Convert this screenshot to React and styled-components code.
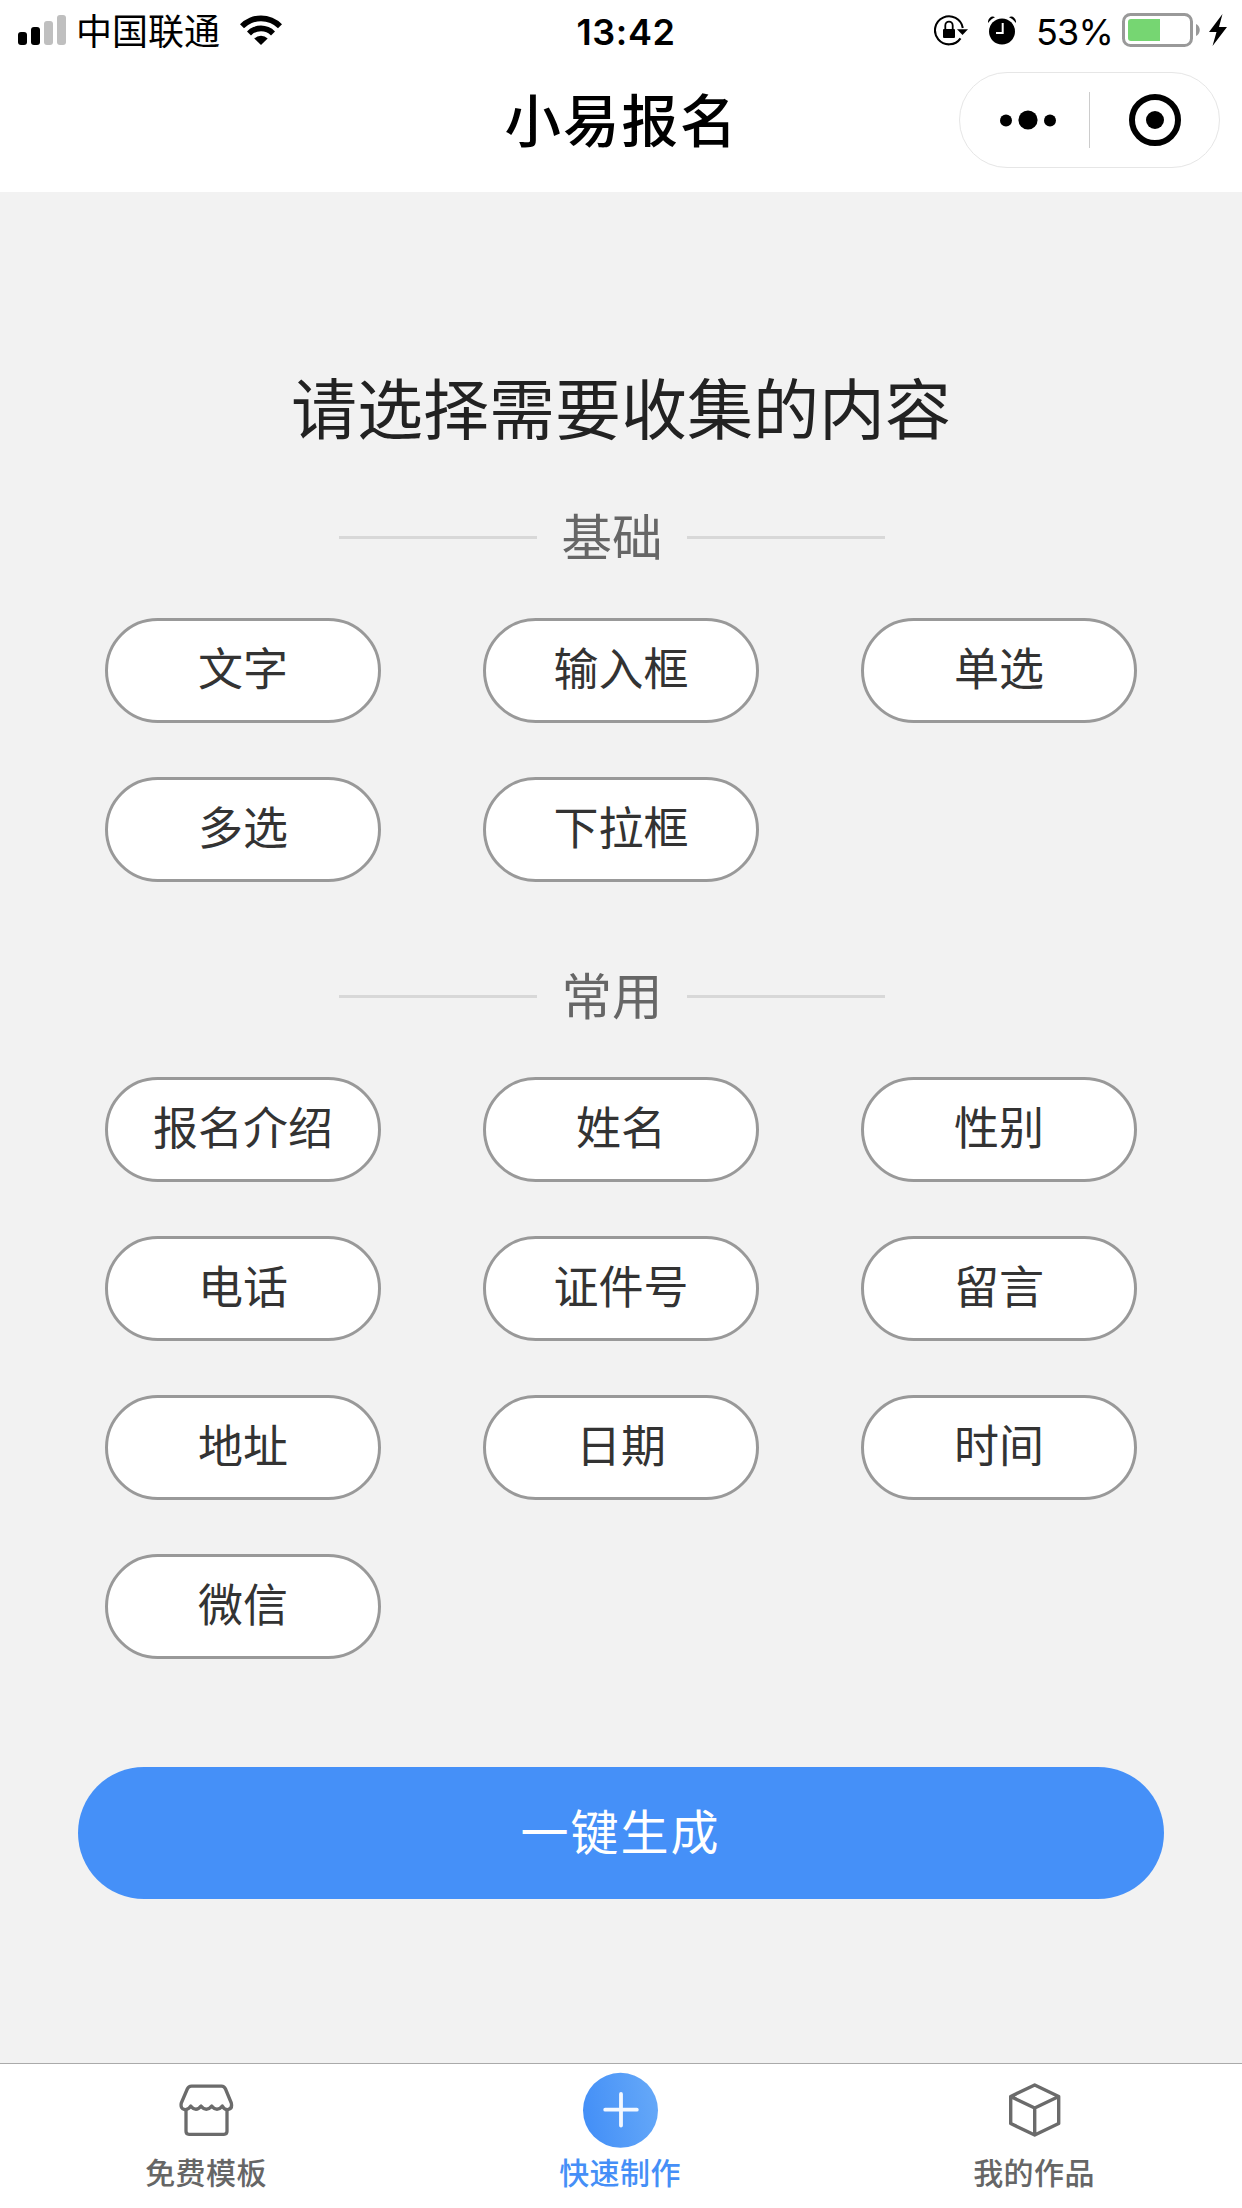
import { useState } from 'react';
import styled, { createGlobalStyle } from 'styled-components';

const basicos = ['文字', '输入框', '单选', '多选', '下拉框'];
const comuns = ['报名介绍', '姓名', '性别', '电话', '证件号', '留言', '地址', '日期', '时间', '微信'];

function StatusBar() {
  return (
    <EstiloStatus>
      <div className="side">
        <svg width="48" height="30" viewBox="0 0 48 30">
          <rect x="0" y="17" width="9" height="13" rx="3" />
          <rect x="13" y="12" width="9" height="18" rx="3" />
          <rect x="26" y="6" width="9" height="24" rx="3" fill="#bfbfbf" />
          <rect x="39" y="0" width="9" height="30" rx="3" fill="#bfbfbf" />
        </svg>
        <span className="carrier">中国联通</span>
        <svg className="wifi" width="42" height="30" viewBox="0 0 42 30">
          <path d="M0 9.2A29.5 29.5 0 0 1 42 9.2L38 13.3A23.8 23.8 0 0 0 4 13.3Z" />
          <path d="M7 16.4A19.6 19.6 0 0 1 35 16.4L31 20.4A14 14 0 0 0 11 20.4Z" />
          <path d="M14.3 23.4A9.6 9.6 0 0 1 27.7 23.4L21 30Z" />
        </svg>
      </div>
      <span className="time">13:42</span>
      <div className="side right">
        <svg width="34" height="31" viewBox="0 0 34 31">
          <path d="M26.5 23.3A14 14 0 1 1 28.8 13" fill="none" stroke="#000" strokeWidth="2.1" />
          <path d="M23 14.2H34L28.5 20Z" />
          <rect x="9" y="14" width="12" height="9" rx="1" />
          <path d="M11.3 14.5V10.5A3.7 3.9 0 0 1 18.7 10.5V14.5" fill="none" stroke="#000" strokeWidth="1.8" />
        </svg>
        <svg className="alarm" width="28" height="29" viewBox="0 0 28 29">
          <circle cx="14" cy="15.5" r="13" />
          <path d="M0 7C-.5 2 4 -1 7 1.2C4.3 2.3 2 4.3 0 7ZM28 7C28.5 2 24 -1 21 1.2C23.7 2.3 26 4.3 28 7Z" />
          <path d="M14.7 7V17H8" fill="none" stroke="#fff" strokeWidth="2" />
        </svg>
        <span className="percent">53%</span>
        <svg width="78" height="34" viewBox="0 0 78 34">
          <rect x="1.5" y="1.5" width="68" height="31" rx="7" fill="none" stroke="#999" strokeWidth="3" />
          <path d="M9 6H38V28H9A3 3 0 0 1 6 25V9A3 3 0 0 1 9 6Z" fill="#76d672" />
          <path d="M74 11C79 13 79 21 74 23Z" fill="#999" />
        </svg>
        <svg className="bolt" width="18" height="32" viewBox="0 0 18 32">
          <path d="M13.5 0L0 18H7.5L3.5 32L18 13H10Z" />
        </svg>
      </div>
    </EstiloStatus>
  )
}

function Secao({ title, items }) {
  return (
    <>
      <EstiloDivisor><span>{title}</span></EstiloDivisor>
      <EstiloGrade>
        {items.map(item => <Opcao key={item}>{item}</Opcao>)}
      </EstiloGrade>
    </>
  )
}

export default function App() {
  const [aba, setAba] = useState(1);

  return (
    <Pagina>
      <GlobalStyle />
      <Topo>
        <StatusBar />
        <Navegacao>
          <h1>小易报名</h1>
          <Capsula>
            <svg width="56" height="20" viewBox="0 0 56 20">
              <circle cx="6" cy="10.5" r="6" />
              <circle cx="28" cy="10" r="9.6" />
              <circle cx="50" cy="10.5" r="6" />
            </svg>
            <i />
            <svg width="52" height="52" viewBox="0 0 52 52">
              <circle cx="26" cy="26" r="23" fill="none" stroke="#000" strokeWidth="6" />
              <circle cx="26" cy="26" r="9" />
            </svg>
          </Capsula>
        </Navegacao>
      </Topo>
      <Conteudo>
        <h2>请选择需要收集的内容</h2>
        <Secao title="基础" items={basicos} />
        <Secao title="常用" items={comuns} />
        <Gerar>一键生成</Gerar>
      </Conteudo>
      <Rodape>
        <Aba $ativa={aba === 0} onClick={() => setAba(0)}>
          <svg width="56" height="76" viewBox="0 0 56 76" fill="none" stroke="#6b6b6b" strokeWidth="3.3" strokeLinejoin="round" strokeLinecap="round">
            <path d="M12.5 14.2H42.5Q45.300 14.200 46.500 17L52.300 31C54 38.500 46 39.500 43.300 34Q38 40.500 32.700 34Q27.300 40.500 22 34Q17 40.500 11.700 34C8.500 39.500 .5 38.500 2.300 31L8.300 17Q9.500 14.200 12.500 14.200Z" />
            <path d="M7 38V59.300Q7 62.300 10 62.300H45Q48 62.300 48 59.300V38" />
          </svg>
          <span>免费模板</span>
        </Aba>
        <Aba $ativa={aba === 1} onClick={() => setAba(1)}>
          <svg width="76" height="76" viewBox="0 0 76 76">
            <defs>
              <linearGradient id="azul" x1="0" y1=".6" x2="1" y2=".4">
                <stop offset="0" stopColor="#438ff7" />
                <stop offset="1" stopColor="#65a8f8" />
              </linearGradient>
            </defs>
            <circle cx="37.5" cy="38.3" r="37.5" fill="url(#azul)" />
            <path d="M38 22V53.5M22.2 37.7H53.8" stroke="#f3f8ff" strokeWidth="3.8" strokeLinecap="round" />
          </svg>
          <span>快速制作</span>
        </Aba>
        <Aba $ativa={aba === 2} onClick={() => setAba(2)}>
          <svg width="56" height="76" viewBox="0 0 56 76" fill="none" stroke="#6b6b6b" strokeWidth="3.4" strokeLinejoin="round">
            <path d="M27.7 13L51.700 24.500V51.500L27.700 63L3.700 51.500V24.500ZM3.700 24.500L27.700 36L51.700 24.500M27.700 36V63" />
          </svg>
          <span>我的作品</span>
        </Aba>
      </Rodape>
    </Pagina>
  )
}

const GlobalStyle = createGlobalStyle`
  * {
    box-sizing: border-box;
    margin: 0;
    padding: 0;
  }
  body {
    font-family: 'Noto Sans CJK SC', sans-serif;
    background: #f2f2f2;
  }
  button {
    font-family: inherit;
    border: none;
  }
  svg {
    display: block;
    flex-shrink: 0;
  }
`

const Pagina = styled.div`
  width: 1242px;
  height: 2208px;
  display: flex;
  flex-direction: column;
`

const Topo = styled.header`
  height: 192px;
  background: #fff;
`

const EstiloStatus = styled.div`
  height: 60px;
  padding: 0 15px 0 18px;
  display: grid;
  grid-template-columns: 1fr auto 1fr;
  align-items: center;
  line-height: 56px;
  .side {
    display: flex;
    align-items: center;
  }
  .right {
    justify-content: flex-end;
  }
  .carrier {
    font-size: 36px;
    margin: 0 0 3px 10px;
  }
  .wifi {
    margin-left: 20px;
  }
  .time {
    font-family: Inter, sans-serif;
    font-weight: 600;
    font-size: 36px;
    letter-spacing: .6px;
    padding: 3px 0 0 7px;
  }
  .alarm {
    margin-left: 20px;
  }
  .percent {
    font-family: Inter, sans-serif;
    font-size: 36px;
    letter-spacing: -.8px;
    margin: 3px 9px 0 20px;
  }
  .bolt {
    margin-left: 9px;
  }
`

const Navegacao = styled.div`
  height: 120px;
  display: grid;
  grid-template-columns: 1fr auto 1fr;
  align-items: center;
  padding-right: 22px;
  h1 {
    grid-column: 2;
    font-size: 56.5px;
    font-weight: 500;
    letter-spacing: 2px;
    line-height: 114px;
    margin-left: 23px;
    padding-bottom: 6px;
  }
`

const Capsula = styled.div`
  justify-self: end;
  width: 261px;
  height: 96px;
  border: 1px solid #e6e6e6;
  border-radius: 48px;
  display: flex;
  align-items: center;
  padding-left: 40px;
  i {
    width: 1px;
    height: 56px;
    background: #ccc;
    margin: 0 39px 0 33px;
  }
`

const Conteudo = styled.main`
  flex: 1;
  padding: 160px 78px 0;
  h2 {
    font-size: 66px;
    font-weight: 400;
    line-height: 106px;
    padding-bottom: 2px;
    color: #222;
    text-align: center;
  }
`

const EstiloDivisor = styled.div`
  width: 546px;
  height: 70px;
  margin: 42px 0 46px 261px;
  display: flex;
  align-items: center;
  justify-content: space-between;
  font-size: 50.5px;
  color: #666;
  span {
    line-height: 64px;
    padding-bottom: 6px;
  }
  &::before, &::after {
    content: '';
    width: 198px;
    height: 3px;
    background: #d8d8d8;
  }
`

const EstiloGrade = styled.div`
  display: grid;
  grid-template-columns: repeat(3, 276px);
  column-gap: 102px;
  row-gap: 54px;
  padding-left: 27px;
  margin-bottom: 79px;
`

const Opcao = styled.button`
  height: 105px;
  border: 3px solid #999;
  border-radius: 53px;
  background: #fff;
  color: #333;
  font-size: 45px;
  line-height: 90px;
  padding-bottom: 8px;
`

const Gerar = styled.button`
  width: 1086px;
  height: 132px;
  margin-top: 29px;
  border-radius: 66px;
  background: #4590f8;
  color: #fff;
  font-size: 48px;
  letter-spacing: 2px;
  padding: 0 1px 9px 0;
`

const Rodape = styled.nav`
  height: 145px;
  border-top: 1px solid #aaa;
  background: #fff;
  display: grid;
  grid-template-columns: repeat(3, 1fr);
`

const Aba = styled.button`
  background: none;
  display: flex;
  flex-direction: column;
  align-items: center;
  padding-top: 8px;
  color: ${props => props.$ativa ? '#458ff7' : '#666'};
  span {
    font-size: 30px;
    font-weight: 500;
    letter-spacing: .4px;
    line-height: 46px;
    margin-right: 2px;
  }
`
